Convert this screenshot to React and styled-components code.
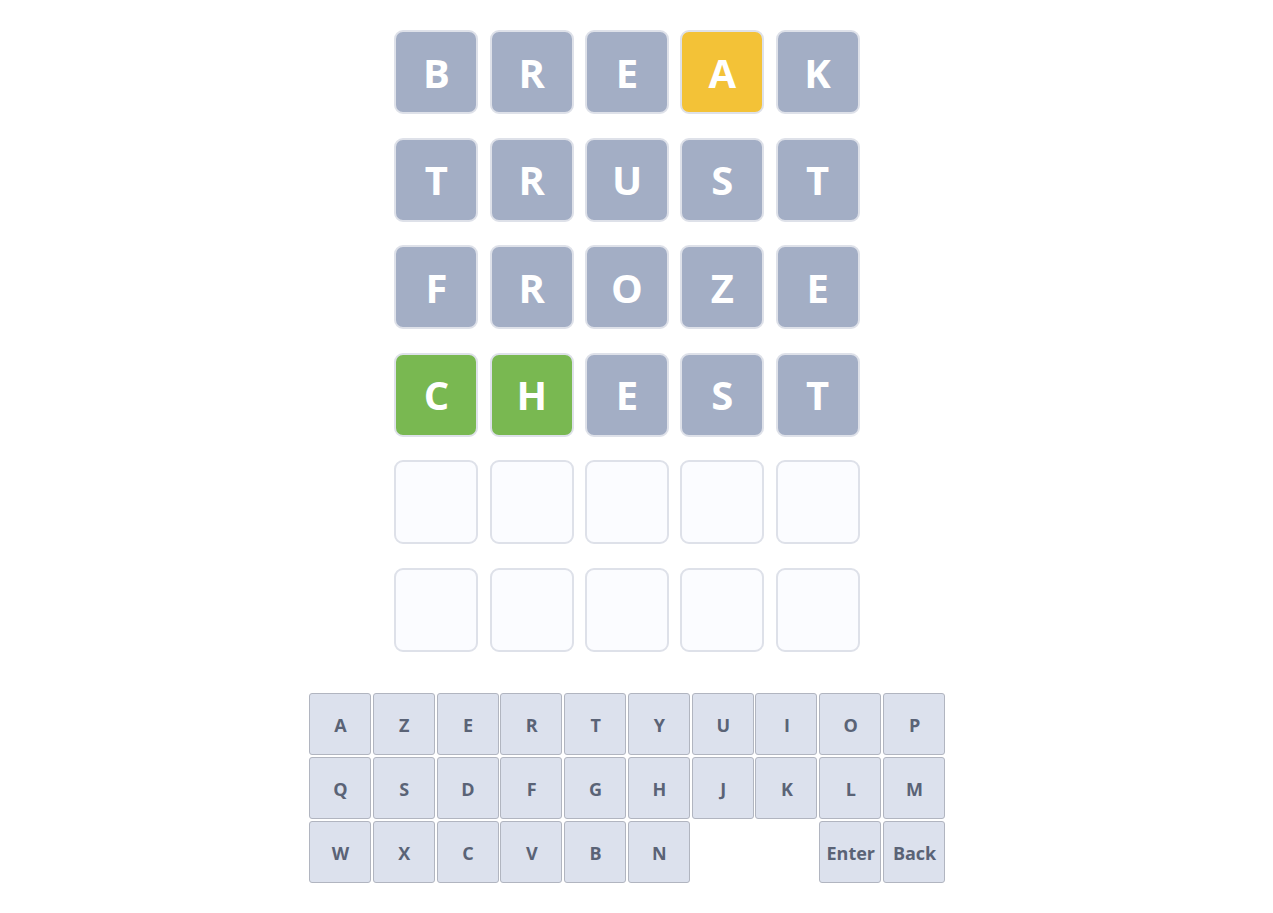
import React from "react";
import styled, { createGlobalStyle } from "styled-components";

const GlobalStyle = createGlobalStyle`
    html, body {
        margin: 0;
        padding: 0;
        background: #ffffff;
        font-family: "Open Sans", "Noto Sans", "Liberation Sans", sans-serif;
    }
`;

const Page = styled.div`
    width: calc(100% - 19px);
    display: flex;
    flex-direction: column;
    align-items: center;
    padding-top: 30px;
`;

const Board = styled.div`
    display: grid;
    grid-template-columns: repeat(5, 84px);
    column-gap: 11.3px;
    row-gap: 23.6px;
`;

const TILE_COLORS = {
    absent: "#a3aec5",
    present: "#f3c237",
    correct: "#79b851",
    empty: "#fbfcff",
};

const Tile = styled.div`
    box-sizing: border-box;
    width: 84px;
    height: 84px;
    border: 2px solid #dee1e9;
    border-radius: 9px;
    background: ${props => TILE_COLORS[props.state]};
    color: #ffffff;
    font-size: 40px;
    font-weight: 700;
    display: flex;
    align-items: center;
    justify-content: center;
`;

const Keyboard = styled.div`
    margin-top: 41px;
    display: grid;
    grid-template-columns: repeat(10, 62px);
    grid-auto-rows: 62px;
    gap: 1.8px;
`;

const Key = styled.button`
    box-sizing: border-box;
    margin: 0;
    padding: 0 0 0 1px;
    border: 1px solid #b1b5c0;
    border-radius: 3px;
    background: #dce1ed;
    color: #5a6376;
    font-family: inherit;
    font-size: 18px;
    font-weight: 700;
    display: flex;
    align-items: center;
    justify-content: center;
    padding-top: 3px;
    grid-column: ${props => props.col || "auto"};
`;

const guesses = [
    [["B", "absent"], ["R", "absent"], ["E", "absent"], ["A", "present"], ["K", "absent"]],
    [["T", "absent"], ["R", "absent"], ["U", "absent"], ["S", "absent"], ["T", "absent"]],
    [["F", "absent"], ["R", "absent"], ["O", "absent"], ["Z", "absent"], ["E", "absent"]],
    [["C", "correct"], ["H", "correct"], ["E", "absent"], ["S", "absent"], ["T", "absent"]],
];

const rows = [...guesses];
while (rows.length < 6) {
    rows.push(Array.from({ length: 5 }, () => ["", "empty"]));
}

const keyRows = [
    ["A", "Z", "E", "R", "T", "Y", "U", "I", "O", "P"],
    ["Q", "S", "D", "F", "G", "H", "J", "K", "L", "M"],
    ["W", "X", "C", "V", "B", "N"],
];

const App = () => {
    return (
        <>
            <GlobalStyle />
            <Page>
                <Board>
                    {rows.map((row, rowIdx) =>
                        row.map(([letter, state], colIdx) => (
                            <Tile key={`${rowIdx}-${colIdx}`} state={state}>
                                {letter}
                            </Tile>
                        ))
                    )}
                </Board>
                <Keyboard>
                    {keyRows.map((row, rowIdx) =>
                        row.map(k => (
                            <Key key={`${rowIdx}-${k}`} type="button">{k}</Key>
                        ))
                    )}
                    <Key type="button" col="9">Enter</Key>
                    <Key type="button" col="10">Back</Key>
                </Keyboard>
            </Page>
        </>
    );
};

export default App;
